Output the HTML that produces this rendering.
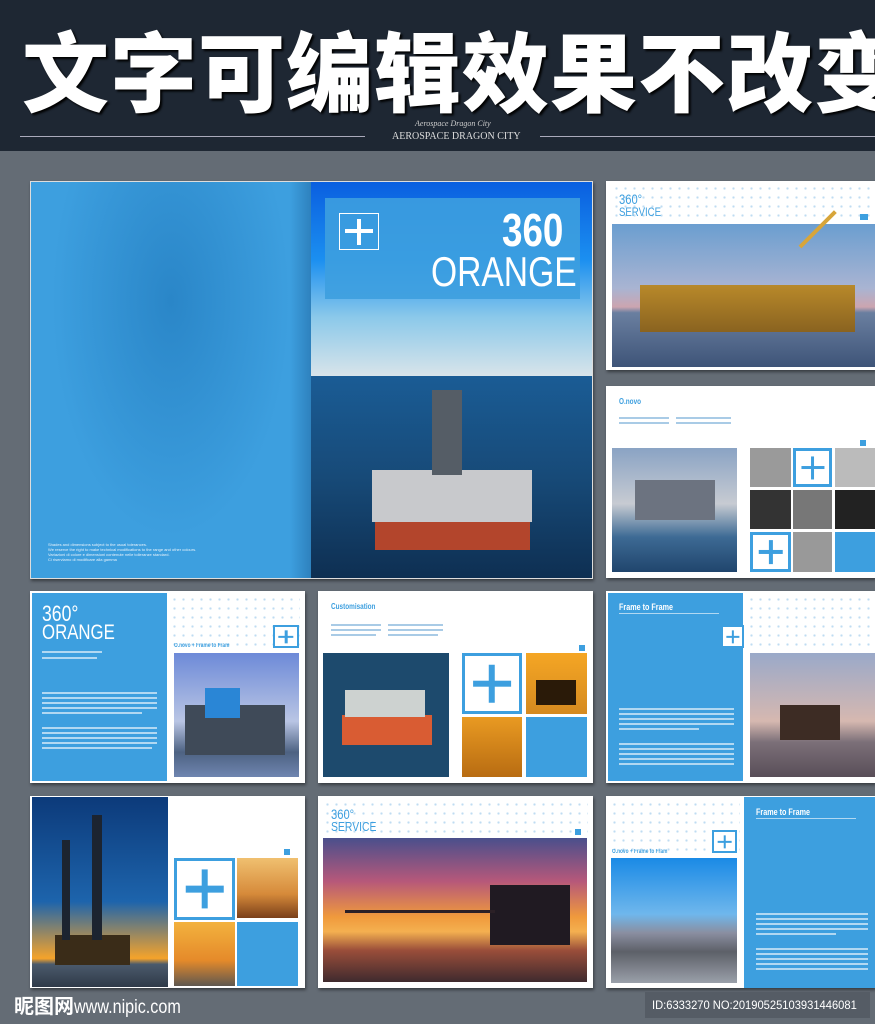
<!DOCTYPE html>
<html><head><meta charset="utf-8"><style>
*{margin:0;padding:0;box-sizing:border-box}
body{width:875px;height:1024px;background:#646c75;position:relative;overflow:hidden;font-family:"Liberation Sans","Noto Sans CJK SC",sans-serif}
.a{position:absolute}
.pg{position:absolute;background:#fff;box-shadow:1px 2px 3px rgba(0,0,0,.45)}
.blue{background:#3d9fdf}
.plus{position:absolute;border:3px solid #3d9fdf;background:#fff}
.plus:before,.plus:after{content:"";position:absolute;background:#3d9fdf;left:50%;top:50%;transform:translate(-50%,-50%)}
.plus:before{width:70%;height:12%}
.plus:after{width:12%;height:70%}
.dots{position:absolute;background-image:radial-gradient(#bfdcf2 1px,transparent 1.3px);background-size:9px 9px}
.t{position:absolute;color:#3d9fdf;font-family:"Liberation Sans",sans-serif;line-height:1;transform:scaleX(.8);transform-origin:left;white-space:nowrap}
.w{color:#fff}
.ln{position:absolute;height:2px;background:rgba(255,255,255,.6)}
.sm{position:absolute;height:2px;background:#a9cbe6}
</style></head><body>
<!-- header -->
<div class="a" style="left:0;top:0;width:875px;height:151px;background:#1e2733"></div>
<div class="a" style="left:22px;top:18px;width:880px;font-size:87px;font-weight:900;color:#fff;letter-spacing:1px;white-space:nowrap;line-height:100px;text-shadow:2px 2px 2px #000;font-family:'Noto Sans CJK SC',sans-serif">文字可编辑效果不改变</div>
<div class="a" style="left:415px;top:119px;font-size:8px;font-style:italic;color:#ccc;font-family:'Liberation Serif',serif">Aerospace Dragon City</div>
<div class="a" style="left:392px;top:131px;font-size:10px;color:#ddd;font-family:'Liberation Serif',serif">AEROSPACE DRAGON CITY</div>
<div class="a" style="left:20px;top:136px;width:345px;height:1px;background:#aab"></div>
<div class="a" style="left:540px;top:136px;width:335px;height:1px;background:#aab"></div>

<!-- spread -->
<div class="pg" style="left:30px;top:181px;width:563px;height:398px;border:1px solid #ddd"></div>
<div class="a" style="left:31px;top:182px;width:280px;height:396px;background:radial-gradient(ellipse at 50% 30%,#2a86c8,#3d9fdf 60%);"></div>
<div class="a" style="left:290px;top:182px;width:21px;height:396px;background:linear-gradient(90deg,rgba(0,0,0,0),rgba(0,40,90,.25))"></div>
<div class="a" style="left:311px;top:182px;width:281px;height:194px;background:linear-gradient(180deg,#0a5fe0 0%,#1b8ff0 40%,#8cc9ea 70%,#d8e4ea 100%)"></div>
<div class="a" style="left:311px;top:376px;width:281px;height:202px;background:linear-gradient(180deg,#1a5c95,#174a78 50%,#0e2f52)"></div>
<div class="a" style="left:375px;top:520px;width:155px;height:30px;background:#b3452c"></div>
<div class="a" style="left:372px;top:470px;width:160px;height:52px;background:#c8c9cc"></div>
<div class="a" style="left:432px;top:390px;width:30px;height:85px;background:#555d66"></div>
<div class="a" style="left:325px;top:198px;width:255px;height:101px;background:rgba(61,159,223,.9)"></div>
<div class="a" style="left:339px;top:213px;width:40px;height:37px;border:1px solid #fff"></div>
<div class="a" style="left:345px;top:229px;width:28px;height:4px;background:#fff"></div>
<div class="a" style="left:357px;top:219px;width:4px;height:26px;background:#fff"></div>
<div class="t w" style="left:502px;top:207px;font-size:46px;font-weight:bold;">360</div>
<div class="t w" style="left:431px;top:251px;font-size:42px;">ORANGE</div>
<div class="a w" style="left:48px;top:542px;font-size:4px;line-height:5px;color:#e6f2fb">Shades and dimensions subject to the usual tolerances.<br>We reserve the right to make technical modifications to the range and other colours.<br>Variazioni di colore e dimensioni contenute nelle tolleranze standard.<br>Ci riserviamo di modificare alla gamma</div>

<!-- right top page -->
<div class="pg" style="left:606px;top:181px;width:269px;height:189px"></div>
<div class="dots" style="left:612px;top:184px;width:263px;height:38px"></div>
<div class="t" style="left:619px;top:192px;font-size:14px">360°</div>
<div class="t" style="left:619px;top:206px;font-size:12px">SERVICE</div>
<div class="a blue" style="left:860px;top:214px;width:8px;height:6px"></div>
<div class="a" style="left:612px;top:224px;width:263px;height:143px;background:linear-gradient(180deg,#6b9ed0 0%,#a9b4d2 45%,#cca5b0 58%,#6a7fa0 62%,#3e5478 100%)"></div>
<div class="a" style="left:640px;top:285px;width:215px;height:47px;background:linear-gradient(180deg,#b8892a,#8a6320)"></div>
<div class="a" style="left:800px;top:245px;width:50px;height:4px;background:#d7a53a;transform:rotate(-45deg);transform-origin:left"></div>

<!-- right second page -->
<div class="pg" style="left:606px;top:386px;width:269px;height:192px"></div>
<div class="t" style="left:619px;top:398px;font-size:8px;font-weight:bold">O.novo</div>
<div class="sm" style="left:619px;top:417px;width:50px"></div><div class="sm" style="left:676px;top:417px;width:55px"></div>
<div class="sm" style="left:619px;top:422px;width:50px"></div><div class="sm" style="left:676px;top:422px;width:55px"></div>
<div class="a blue" style="left:860px;top:440px;width:6px;height:6px"></div>
<div class="a" style="left:612px;top:448px;width:125px;height:124px;background:linear-gradient(180deg,#8aa3c4,#c7cbd2 45%,#3d6a94 72%,#20456d)"></div>
<div class="a" style="left:635px;top:480px;width:80px;height:40px;background:#6c7380"></div>
<div class="a" style="left:750px;top:448px;width:41px;height:39px;background:#9a9a9a"></div>
<div class="plus" style="left:793px;top:448px;width:39px;height:39px"></div>
<div class="a" style="left:835px;top:448px;width:40px;height:39px;background:#bbb"></div>
<div class="a" style="left:750px;top:490px;width:41px;height:39px;background:#333"></div>
<div class="a" style="left:793px;top:490px;width:39px;height:39px;background:#777"></div>
<div class="a" style="left:835px;top:490px;width:40px;height:39px;background:#222"></div>
<div class="plus" style="left:750px;top:532px;width:41px;height:40px"></div>
<div class="a" style="left:793px;top:532px;width:39px;height:40px;background:#999"></div>
<div class="a blue" style="left:835px;top:532px;width:40px;height:40px"></div>

<!-- row 2 page 1 -->
<div class="pg" style="left:30px;top:591px;width:275px;height:192px"></div>
<div class="a blue" style="left:32px;top:593px;width:135px;height:188px"></div>
<div class="t w" style="left:42px;top:603px;font-size:22px">360°</div>
<div class="t w" style="left:42px;top:622px;font-size:21px">ORANGE</div>
<div class="ln" style="left:42px;top:651px;width:60px"></div><div class="ln" style="left:42px;top:657px;width:55px"></div>
<div class="ln" style="left:42px;top:692px;width:115px"></div><div class="ln" style="left:42px;top:697px;width:115px"></div><div class="ln" style="left:42px;top:702px;width:115px"></div><div class="ln" style="left:42px;top:707px;width:115px"></div><div class="ln" style="left:42px;top:712px;width:100px"></div>
<div class="ln" style="left:42px;top:727px;width:115px"></div><div class="ln" style="left:42px;top:732px;width:115px"></div><div class="ln" style="left:42px;top:737px;width:115px"></div><div class="ln" style="left:42px;top:742px;width:115px"></div><div class="ln" style="left:42px;top:747px;width:110px"></div>
<div class="dots" style="left:170px;top:595px;width:130px;height:55px"></div>
<div class="plus" style="left:273px;top:625px;width:26px;height:23px;border-width:2px"></div>
<div class="t" style="left:174px;top:643px;font-size:6px;font-weight:bold">O.novo + Frame to Fram</div>
<div class="a" style="left:174px;top:653px;width:125px;height:124px;background:linear-gradient(180deg,#6d8ad8,#b9c5e4 55%,#4d6282 80%,#6f85b0)"></div>
<div class="a" style="left:185px;top:705px;width:100px;height:50px;background:#3f4a58"></div>
<div class="a" style="left:205px;top:688px;width:35px;height:30px;background:#2a86d6"></div>

<!-- row 2 page 2 -->
<div class="pg" style="left:318px;top:591px;width:275px;height:192px"></div>
<div class="t" style="left:331px;top:603px;font-size:8px;font-weight:bold">Customisation</div>
<div class="sm" style="left:331px;top:624px;width:50px"></div><div class="sm" style="left:388px;top:624px;width:55px"></div>
<div class="sm" style="left:331px;top:629px;width:50px"></div><div class="sm" style="left:388px;top:629px;width:55px"></div>
<div class="sm" style="left:331px;top:634px;width:45px"></div><div class="sm" style="left:388px;top:634px;width:50px"></div>
<div class="a blue" style="left:579px;top:645px;width:6px;height:6px"></div>
<div class="a" style="left:323px;top:653px;width:126px;height:124px;background:#1d4a6d"></div>
<div class="a" style="left:342px;top:715px;width:90px;height:30px;background:#d95c33"></div>
<div class="a" style="left:345px;top:690px;width:80px;height:27px;background:#cdd2d0"></div>
<div class="plus" style="left:462px;top:653px;width:60px;height:61px"></div>
<div class="a" style="left:526px;top:653px;width:61px;height:61px;background:linear-gradient(180deg,#f5a624,#d58a20)"></div>
<div class="a" style="left:536px;top:680px;width:40px;height:25px;background:#2a1a08"></div>
<div class="a" style="left:462px;top:717px;width:60px;height:60px;background:linear-gradient(180deg,#e99a22,#b86c12)"></div>
<div class="a blue" style="left:526px;top:717px;width:61px;height:60px"></div>

<!-- row 2 page 3 -->
<div class="pg" style="left:606px;top:591px;width:269px;height:192px"></div>
<div class="a blue" style="left:608px;top:593px;width:135px;height:188px"></div>
<div class="t w" style="left:619px;top:603px;font-size:9px;font-weight:bold">Frame to Frame</div>
<div class="ln" style="left:619px;top:613px;width:100px;height:1px"></div>
<div class="ln" style="left:619px;top:708px;width:115px"></div><div class="ln" style="left:619px;top:713px;width:115px"></div><div class="ln" style="left:619px;top:718px;width:115px"></div><div class="ln" style="left:619px;top:723px;width:115px"></div><div class="ln" style="left:619px;top:728px;width:80px"></div>
<div class="ln" style="left:619px;top:743px;width:115px"></div><div class="ln" style="left:619px;top:748px;width:115px"></div><div class="ln" style="left:619px;top:753px;width:115px"></div><div class="ln" style="left:619px;top:758px;width:115px"></div><div class="ln" style="left:619px;top:763px;width:115px"></div>
<div class="dots" style="left:747px;top:595px;width:128px;height:55px"></div>
<div class="plus" style="left:721px;top:625px;width:23px;height:23px;border-width:2px"></div>
<div class="a" style="left:750px;top:653px;width:125px;height:124px;background:linear-gradient(180deg,#9aa9c9,#d6b8b0 55%,#7b6f78 72%,#594e58)"></div>
<div class="a" style="left:780px;top:705px;width:60px;height:35px;background:#3d2c24"></div>

<!-- row 3 page 1 -->
<div class="pg" style="left:30px;top:796px;width:275px;height:192px"></div>
<div class="a" style="left:32px;top:797px;width:136px;height:190px;background:linear-gradient(180deg,#0c3a7a,#1d64ac 55%,#f5a32a 85%,#4b5a6c 88%,#2f3a48)"></div>
<div class="a" style="left:55px;top:935px;width:75px;height:30px;background:#3a2c18"></div>
<div class="a" style="left:92px;top:815px;width:10px;height:125px;background:#1c2430"></div>
<div class="a" style="left:62px;top:840px;width:8px;height:100px;background:#1c2430"></div>
<div class="a blue" style="left:284px;top:849px;width:6px;height:6px"></div>
<div class="plus" style="left:174px;top:858px;width:61px;height:62px"></div>
<div class="a" style="left:237px;top:858px;width:61px;height:60px;background:linear-gradient(180deg,#f0c070,#d68a3a 60%,#7a3f1a)"></div>
<div class="a" style="left:174px;top:922px;width:61px;height:64px;background:linear-gradient(180deg,#f3b23e,#e58a2a 60%,#5f5850)"></div>
<div class="a blue" style="left:237px;top:922px;width:61px;height:64px"></div>

<!-- row 3 page 2 -->
<div class="pg" style="left:318px;top:796px;width:275px;height:192px"></div>
<div class="dots" style="left:323px;top:800px;width:265px;height:35px"></div>
<div class="t" style="left:331px;top:807px;font-size:14px">360°</div>
<div class="t" style="left:331px;top:820px;font-size:13px">SERVICE</div>
<div class="a blue" style="left:575px;top:829px;width:6px;height:6px"></div>
<div class="a" style="left:323px;top:838px;width:264px;height:144px;background:linear-gradient(180deg,#4a4f8c 0%,#b6587a 30%,#f09a3c 55%,#f4b050 65%,#9a4e3a 78%,#3f2a2e 100%)"></div>
<div class="a" style="left:490px;top:885px;width:80px;height:60px;background:#201a22"></div>
<div class="a" style="left:345px;top:910px;width:150px;height:3px;background:#2b2026"></div>

<!-- row 3 page 3 -->
<div class="pg" style="left:606px;top:796px;width:269px;height:192px"></div>
<div class="dots" style="left:610px;top:800px;width:130px;height:55px"></div>
<div class="a blue" style="left:744px;top:797px;width:131px;height:191px"></div>
<div class="t w" style="left:756px;top:808px;font-size:9px;font-weight:bold">Frame to Frame</div>
<div class="ln" style="left:756px;top:818px;width:100px;height:1px"></div>
<div class="ln" style="left:756px;top:913px;width:112px"></div><div class="ln" style="left:756px;top:918px;width:112px"></div><div class="ln" style="left:756px;top:923px;width:112px"></div><div class="ln" style="left:756px;top:928px;width:112px"></div><div class="ln" style="left:756px;top:933px;width:80px"></div>
<div class="ln" style="left:756px;top:948px;width:112px"></div><div class="ln" style="left:756px;top:953px;width:112px"></div><div class="ln" style="left:756px;top:958px;width:112px"></div><div class="ln" style="left:756px;top:963px;width:112px"></div><div class="ln" style="left:756px;top:968px;width:112px"></div>
<div class="plus" style="left:712px;top:830px;width:25px;height:23px;border-width:2px"></div>
<div class="t" style="left:612px;top:849px;font-size:6px;font-weight:bold">O.novo + Frame to Fram</div>
<div class="a" style="left:611px;top:858px;width:126px;height:125px;background:linear-gradient(180deg,#1a8ae6,#6fb7ec 45%,#8a8ea0 60%,#5d6068 75%,#9aa0aa)"></div>

<!-- footer -->
<div class="a" style="left:14px;top:992px;font-size:20px;color:#fff;font-family:'Noto Sans CJK SC',sans-serif;font-weight:bold;line-height:26px;white-space:nowrap">昵图网<span style="font-family:'Liberation Sans',sans-serif;font-weight:normal;font-size:19px;display:inline-block;transform:scaleX(.85);transform-origin:left"> www.nipic.com</span></div>
<div class="a" style="left:645px;top:992px;width:225px;height:26px;background:#555c65"></div>
<div class="a" style="left:652px;top:992px;color:#fff;font-size:12px;line-height:26px;white-space:nowrap;transform:scaleX(.93);transform-origin:left">ID:6333270 NO:20190525103931446081</div>
</body></html>
